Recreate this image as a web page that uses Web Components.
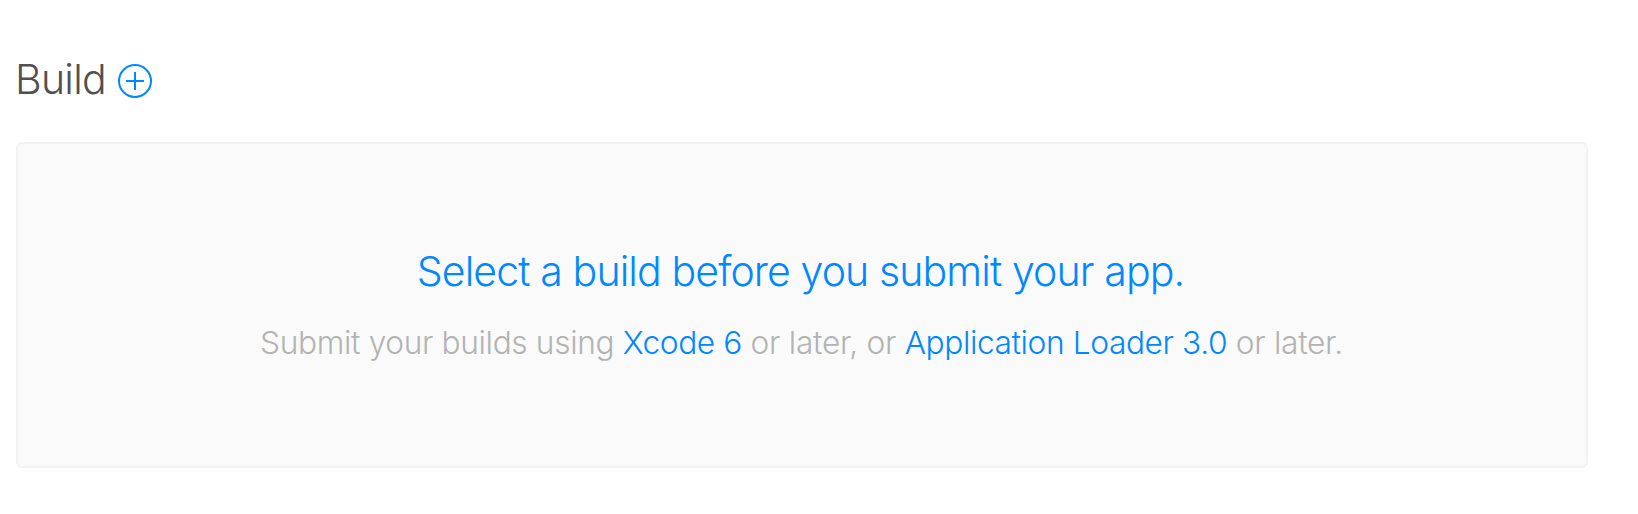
<!DOCTYPE html>
<html lang="en">
<head>
<meta charset="utf-8">
<title>Build</title>
<style>
html,body{margin:0;background:#fff;overflow:hidden}
body{font-family:Inter,"Liberation Sans",sans-serif;font-weight:300;-webkit-font-smoothing:antialiased}
.lead{letter-spacing:-.37px}
</style>
</head>
<body>
<build-section>
  <section-heading slot="heading">Build</section-heading>
  <empty-panel>
    <span slot="title">Select a build before you submit your app.</span>
    <span class="lead">Submit your builds using</span>
    <text-link>Xcode 6</text-link>
    <span>or later, or</span>
    <text-link>Application Loader 3.0</text-link>
    <span>or later.</span>
  </empty-panel>
</build-section>
<script>
const define = (name, html) => customElements.define(name, class extends HTMLElement {
  constructor() {
    super();
    this.attachShadow({mode: "open"}).innerHTML = html;
  }
});
define("build-section", `
<style>
:host{display:flex;flex-direction:column;box-sizing:border-box;height:514px;padding:54px 50px 46px 16px;gap:36px}
</style>
<slot name="heading"></slot><slot></slot>`);
define("add-button", `
<style>
:host{display:block;width:34px;height:34px;margin-top:2px}
svg{display:block}
</style>
<svg width="34" height="34" viewBox="0 0 34 34" fill="none" stroke="#0088ff" stroke-width="2" role="img" aria-label="Add build"><circle cx="17" cy="17" r="16"/><path d="M8 17h18M17 8v18"/></svg>`);
define("section-heading", `
<style>
:host{display:flex;align-items:center;height:52px;color:#505050}
h2{margin:0 1px 2px -1px;font-size:41px;line-height:50px;font-weight:300;letter-spacing:-.7px;width:102px;white-space:nowrap}
</style>
<h2><slot></slot></h2><add-button></add-button>`);
define("text-link", `
<style>
:host{display:inline;color:#0088ff;cursor:pointer;letter-spacing:-.4px}
</style>
<slot></slot>`);
define("empty-panel", `
<style>
:host{display:flex;flex-direction:column;align-items:center;justify-content:center;box-sizing:border-box;height:326px;border:2px solid #f2f2f2;border-radius:6px;background:#fafafa;text-align:center;white-space:nowrap}
.title{font-size:41px;line-height:50px;letter-spacing:-.88px;color:#0088ff;margin:-1px 3px 0 0}
.note{font-size:31.7px;line-height:40px;letter-spacing:-.29px;color:#b3b3b3;margin:27px 1px 0 0}
</style>
<div class="title"><slot name="title"></slot></div>
<div class="note"><slot></slot></div>`);
</script>
</body>
</html>
